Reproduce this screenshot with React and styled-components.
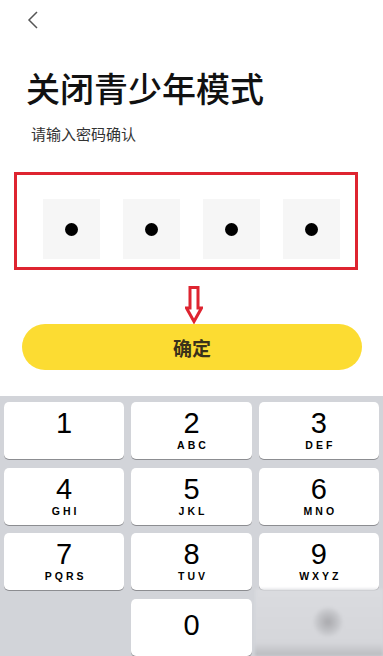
import React from "react";
import styled, { createGlobalStyle } from "styled-components";

const Global = createGlobalStyle`
  html, body { margin: 0; padding: 0; background: #fff; }
  body { font-family: "Noto Sans CJK SC", "Noto Sans", sans-serif; }
  * { box-sizing: border-box; }
`;

const Page = styled.div`
  width: 383px;
  height: 656px;
  display: flex;
  flex-direction: column;
  overflow: hidden;
  background: #fff;
`;

const Header = styled.div`
  height: 38px;
  display: flex;
  align-items: center;
  padding-left: 26px;
  padding-top: 2px;
`;

const Title = styled.h1`
  margin: 30px 0 0 26px;
  font-size: 34px;
  line-height: 40px;
  font-weight: 500;
  color: #111;
`;

const Subtitle = styled.p`
  margin: 16px 0 0 31px;
  font-size: 15px;
  line-height: 20px;
  color: #333;
`;

const Highlight = styled.div`
  margin: 28px 0 0 14px;
  width: 344px;
  height: 98px;
  border: 3px solid #de2430;
  padding: 24px 0 0 26px;
  display: flex;
  gap: 23.5px;
`;

const Cell = styled.div`
  width: 56.5px;
  height: 60px;
  background: #f6f6f6;
  display: flex;
  align-items: center;
  justify-content: center;
`;

const Dot = styled.span`
  width: 13px;
  height: 13px;
  border-radius: 50%;
  background: #000;
`;

const ArrowRow = styled.div`
  height: 54px;
  display: flex;
  justify-content: center;
  padding: 16px 0 0 4px;
`;

const ConfirmButton = styled.button`
  margin: 0 0 0 22px;
  width: 340px;
  height: 46px;
  border: none;
  border-radius: 23px;
  background: #fcdc32;
  font-family: "Noto Sans CJK SC", sans-serif;
  font-size: 19px;
  font-weight: 700;
  color: #3a321a;
  padding: 0;
`;

const Keyboard = styled.div`
  margin-top: 26px;
  flex: 1;
  background: #d2d4d9;
  padding: 6px 4px 0 4px;
  display: grid;
  grid-template-columns: repeat(3, 1fr);
  grid-auto-rows: 57px;
  column-gap: 7px;
  row-gap: 8.5px;
`;

const Key = styled.div`
  background: ${(p) => (p.$blank ? "transparent" : "#fff")};
  border-radius: 5px;
  box-shadow: ${(p) => (p.$blank ? "none" : "0 1px 0 #8c8d91")};
  display: flex;
  flex-direction: column;
  align-items: center;
  justify-content: center;
  font-family: "Liberation Sans", Arial, sans-serif;
  color: #000;
  padding-bottom: ${(p) => (p.$single ? "5px" : "0")};
`;

const Digit = styled.span`
  font-size: 29px;
  line-height: 28px;
`;

const Letters = styled.span`
  font-size: 10.5px;
  font-weight: 700;
  letter-spacing: 3px;
  margin-right: -3px;
  line-height: 14px;
  margin-top: 1px;
  min-height: 14px;
`;

const BlurredKey = styled.div`
  margin: -10px -4px 0 -4px;
  background: linear-gradient(180deg, #dadbdf 0%, #d5d6da 80%, #b9babe 100%);
  display: flex;
  align-items: center;
  justify-content: center;
  filter: blur(1.5px);
`;

const Blob = styled.div`
  width: 30px;
  height: 30px;
  border-radius: 50%;
  margin-left: 18px;
  background: radial-gradient(circle, #a9a9ad 0%, #c2c3c7 45%, rgba(210,212,216,0) 75%);
`;

const keys = [
  ["1", ""],
  ["2", "ABC"],
  ["3", "DEF"],
  ["4", "GHI"],
  ["5", "JKL"],
  ["6", "MNO"],
  ["7", "PQRS"],
  ["8", "TUV"],
  ["9", "WXYZ"],
];

export default function App() {
  return (
    <>
      <Global />
      <Page>
        <Header>
          <svg width="14" height="20" viewBox="0 0 14 20">
            <path d="M11 2 L3 10 L11 18" fill="none" stroke="#555" strokeWidth="1.5" />
          </svg>
        </Header>
        <Title>关闭青少年模式</Title>
        <Subtitle>请输入密码确认</Subtitle>
        <Highlight>
          {[0, 1, 2, 3].map((i) => (
            <Cell key={i}>
              <Dot />
            </Cell>
          ))}
        </Highlight>
        <ArrowRow>
          <svg width="18" height="38" viewBox="0 0 18 38">
            <path
              d="M5 1.5 H13 V22 H16.5 L9 35.5 L1.5 22 H5 Z"
              fill="#fff"
              stroke="#de2430"
              strokeWidth="3"
              strokeLinejoin="miter"
            />
          </svg>
        </ArrowRow>
        <ConfirmButton>确定</ConfirmButton>
        <Keyboard>
          {keys.map(([d, l]) => (
            <Key key={d}>
              <Digit>{d}</Digit>
              <Letters>{l}</Letters>
            </Key>
          ))}
          <Key $blank />
          <Key $single>
            <Digit>0</Digit>
          </Key>
          <BlurredKey>
            <Blob />
          </BlurredKey>
        </Keyboard>
      </Page>
    </>
  );
}
